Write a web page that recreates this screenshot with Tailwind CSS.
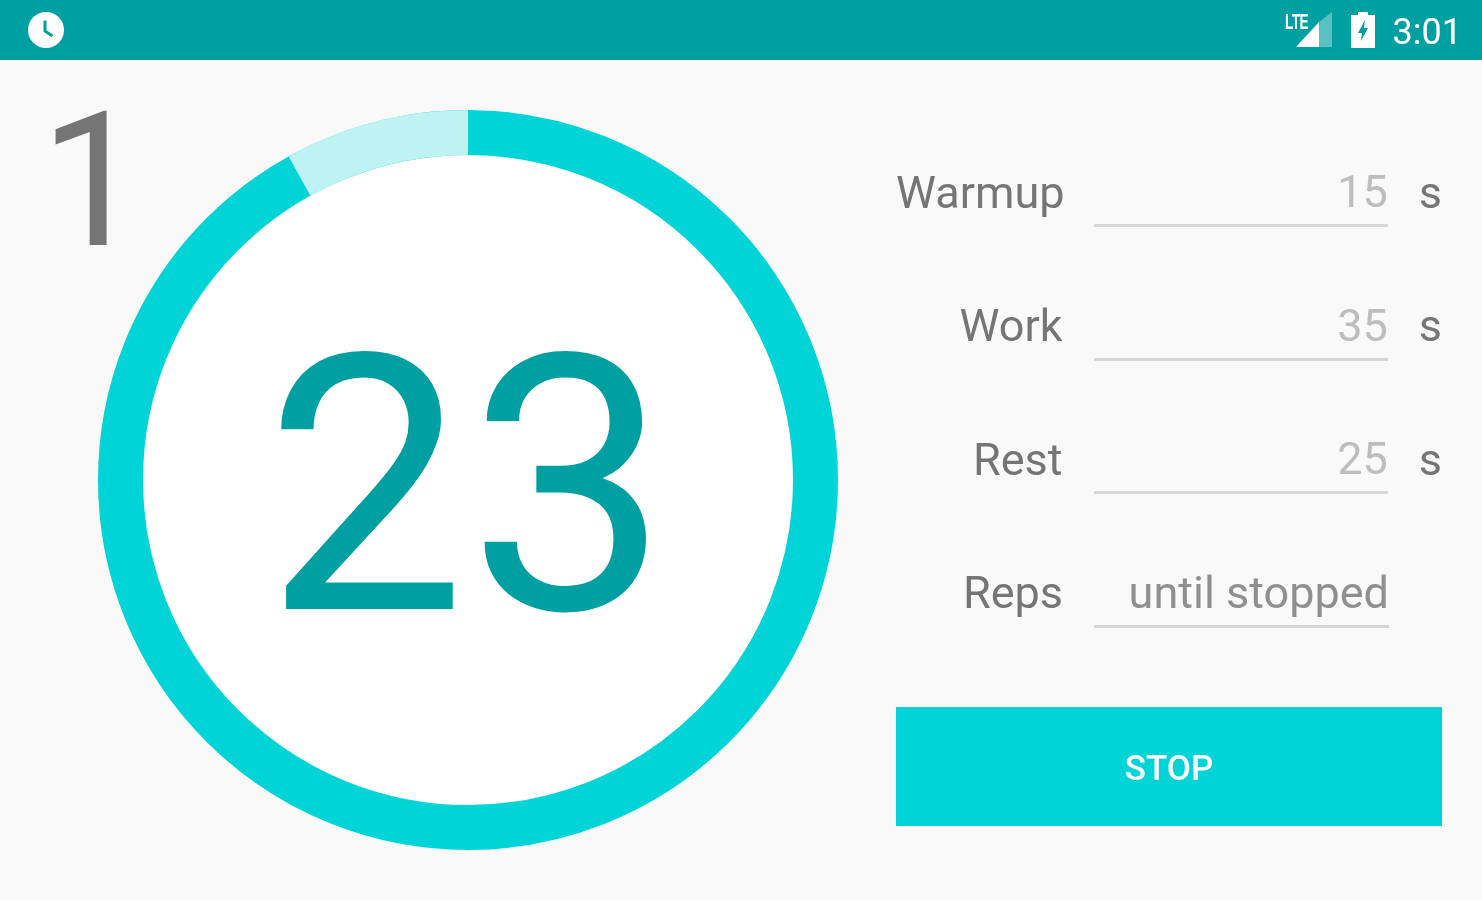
<!DOCTYPE html>
<html>
<head>
<meta charset="utf-8">
<script src="https://cdn.jsdelivr.net/npm/@tailwindcss/browser@4"></script>
</head>
<body class="bg-[#f9f9f9] font-['Roboto',sans-serif] overflow-hidden">
<div class="w-[1482px] h-[900px] flex flex-col blur-[0.6px]">
  <!-- status bar -->
  <header class="h-[60px] bg-[#00a0a2] flex items-center justify-between pl-[27px] pr-[20px] text-white shrink-0">
    <svg width="38" height="38" viewBox="0 0 38 38">
      <circle cx="19" cy="19" r="18" fill="#fff"/>
      <path d="M18 9.5v10.5l7.5 5" fill="none" stroke="#00a0a2" stroke-width="3"/>
    </svg>
    <div class="flex items-center">
      <div class="relative w-[47px] h-[38px]">
        <svg class="absolute inset-0" width="47" height="38" viewBox="0 0 47 38">
          <path d="M47 1v35H34V11z" fill="#fff" fill-opacity=".35"/>
          <path d="M34 11v25H11z" fill="#fff"/>
        </svg>
        <span class="absolute left-0 top-[-1px] text-[22px] leading-[24px] font-bold font-['Liberation_Sans',sans-serif] scale-x-[.62] origin-left tracking-[-1px]">LTE</span>
      </div>
      <svg class="ml-[19px]" width="24" height="36" viewBox="0 0 24 36">
        <path d="M7 0h10v3h7v33H0V3h7z" fill="#fff"/>
        <path d="M14 8l-7 13h4l-1 8 7-13h-4z" fill="#00a0a2"/>
      </svg>
      <span class="ml-[18px] text-[36px] leading-none pt-[3px]">3:01</span>
    </div>
  </header>

  <main class="flex flex-1">
    <!-- timer -->
    <section class="relative w-[896px] shrink-0">
      <span class="absolute left-[40px] top-[12px] text-[187px] leading-[220px] font-normal text-[#757575]">1</span>
      <div class="absolute left-[98px] top-[50px] w-[740px] h-[740px]">
        <svg width="740" height="740" viewBox="0 0 740 740">
          <circle cx="370" cy="370" r="325" fill="#fff"/>
          <circle cx="370" cy="370" r="347.5" fill="none" stroke="#00d4d6" stroke-width="45"/>
          <path d="M370 22.5A347.5 347.5 0 0 0 201.5 66.1" fill="none" stroke="#bff3f3" stroke-width="45"/>
        </svg>
        <div class="absolute inset-0 flex items-center justify-center pt-[13px] text-[358px] tracking-[2px] leading-none text-[#00a0a2]">23</div>
      </div>
    </section>

    <!-- settings -->
    <section class="w-[546px] pt-[95px]">
      <div class="flex items-end h-[72px] text-[45px] leading-[60px] text-[#757575]">
        <span class="w-[167px] text-right pb-[4px]">Warmup</span>
        <div class="ml-[31px] w-[295px] border-b-[3px] border-[#d6d6d6] text-right text-[#bdbdbd] h-[72px] pt-[7px]">15</div>
        <span class="ml-[31px] pb-[4px]">s</span>
      </div>
      <div class="flex items-end h-[72px] mt-[61.5px] text-[45px] leading-[60px] text-[#757575]">
        <span class="w-[167px] text-right pb-[5px]">Work</span>
        <div class="ml-[31px] w-[295px] border-b-[3px] border-[#d6d6d6] text-right text-[#bdbdbd] h-[72px] pt-[7px]">35</div>
        <span class="ml-[31px] pb-[5px]">s</span>
      </div>
      <div class="flex items-end h-[72px] mt-[61.5px] text-[45px] leading-[60px] text-[#757575]">
        <span class="w-[167px] text-right pb-[4px]">Rest</span>
        <div class="ml-[31px] w-[295px] border-b-[3px] border-[#d6d6d6] text-right text-[#bdbdbd] h-[72px] pt-[7px]">25</div>
        <span class="ml-[31px] pb-[4px]">s</span>
      </div>
      <div class="flex items-end h-[72px] mt-[61.5px] text-[45px] leading-[60px] text-[#757575]">
        <span class="w-[167px] text-right pb-[5px]">Reps</span>
        <div class="ml-[31px] w-[295px] border-b-[3px] border-[#d6d6d6] text-right text-[#8f8f8f] h-[72px] pt-[7px]">until stopped</div>
      </div>
      <button class="block mt-[79.5px] w-[546px] h-[119px] bg-[#00d4d6] text-white text-[35px] font-medium pt-[6px]">STOP</button>
    </section>
  </main>
</div>
</body>
</html>
